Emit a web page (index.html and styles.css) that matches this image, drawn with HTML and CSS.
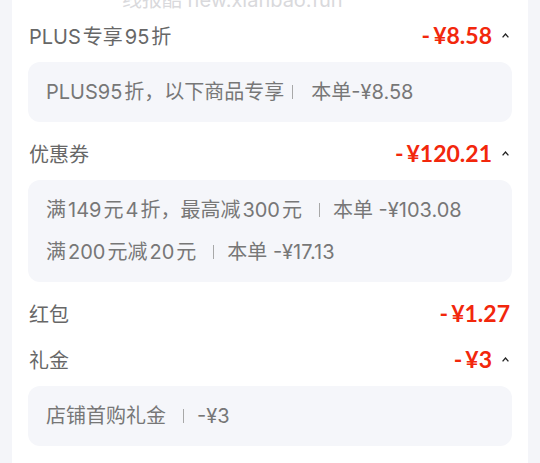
FILE: index.html
```html
<!DOCTYPE html>
<html lang="zh-CN">
<head>
<meta charset="utf-8">
<link rel="stylesheet" href="styles.css">
</head>
<body>
<div class="card">
  <div class="watermark">线报酷 new.xianbao.fun</div>

  <section class="sec">
    <div class="head">
      <span class="label"><span class="wr">PLUS</span>专享<span class="w">95</span>折</span>
      <span class="amt"><span class="dash">-</span>¥8.58<span class="caret"><svg width="7" height="5" viewBox="0 0 7 5"><polyline points="0.6,4.4 3.5,1 6.4,4.4" fill="none" stroke="#222" stroke-width="1.3"/></svg></span></span>
    </div>
    <div class="box">
      <div class="line"><span class="wr">PLUS95</span>折，以下商品专享<i class="sep sep-tight"></i>本单-¥8.58</div>
    </div>
  </section>

  <section class="sec">
    <div class="head">
      <span class="label">优惠券</span>
      <span class="amt"><span class="dash">-</span>¥120.21<span class="caret"><svg width="7" height="5" viewBox="0 0 7 5"><polyline points="0.6,4.4 3.5,1 6.4,4.4" fill="none" stroke="#222" stroke-width="1.3"/></svg></span></span>
    </div>
    <div class="box">
      <div class="line">满<span class="w">149</span>元<span class="w">4</span>折，最高减<span class="w">300</span>元<i class="sep"></i>本单 -¥103.08</div>
      <div class="line">满<span class="w">200</span>元减<span class="w">20</span>元<i class="sep"></i>本单 -¥17.13</div>
    </div>
  </section>

  <section class="sec">
    <div class="head">
      <span class="label">红包</span>
      <span class="amt amt-plain"><span class="dash">-</span>¥1.27</span>
    </div>
  </section>

  <section class="sec">
    <div class="head">
      <span class="label">礼金</span>
      <span class="amt"><span class="dash">-</span>¥3<span class="caret"><svg width="7" height="5" viewBox="0 0 7 5"><polyline points="0.6,4.4 3.5,1 6.4,4.4" fill="none" stroke="#222" stroke-width="1.3"/></svg></span></span>
    </div>
    <div class="box">
      <div class="line">店铺首购礼金<i class="sep"></i>-¥3</div>
    </div>
  </section>
</div>
</body>
</html>
```

FILE: styles.css
```css
html, body {
  margin: 0;
  padding: 0;
}
body {
  background: #f4f5f9;
  font-family: "Inter", "Noto Sans CJK SC", sans-serif;
  overflow: hidden;
  height: 463px;
}
.card {
  position: relative;
  margin: 0 12px;
  background: #ffffff;
  padding: 20px 16px 20px;
  height: 463px;
  box-sizing: border-box;
}
.watermark {
  position: absolute;
  top: -15px;
  left: 110px;
  font-size: 20px;
  line-height: 30px;
  color: #d9d9dc;
  white-space: nowrap;
}
.sec + .sec {
  margin-top: 16px;
}
.head {
  height: 30px;
  display: flex;
  align-items: center;
  justify-content: space-between;
  padding: 0 0 0 1px;
}
.label {
  font-size: 20px;
  color: #676767;
}
.w {
  margin: 0 2px;
}
.wr {
  margin-right: 2px;
}
.amt {
  display: flex;
  align-items: center;
  font-family: "Lato", "Noto Sans CJK SC", sans-serif;
  font-size: 23px;
  font-weight: 700;
  color: #f2270c;
}
.amt-plain {
  margin-right: 2px;
}
.dash {
  margin-right: 3px;
}
.caret {
  display: flex;
  align-items: center;
  justify-content: center;
  width: 14px;
  height: 14px;
  margin-left: 6px;
}
.box {
  margin-top: 12px;
  background: #f5f6fa;
  border-radius: 12px;
  padding: 15px 18px;
  display: flex;
  flex-direction: column;
  gap: 12px;
}
.line {
  font-size: 20px;
  line-height: 30px;
  color: #777777;
  white-space: nowrap;
  display: flex;
  align-items: center;
}
.sep {
  display: inline-block;
  width: 1px;
  height: 14px;
  background: #a8a8a8;
  margin: 0 13px 0 17px;
}
.sep-tight {
  margin: 0 18px 0 8px;
}
```
